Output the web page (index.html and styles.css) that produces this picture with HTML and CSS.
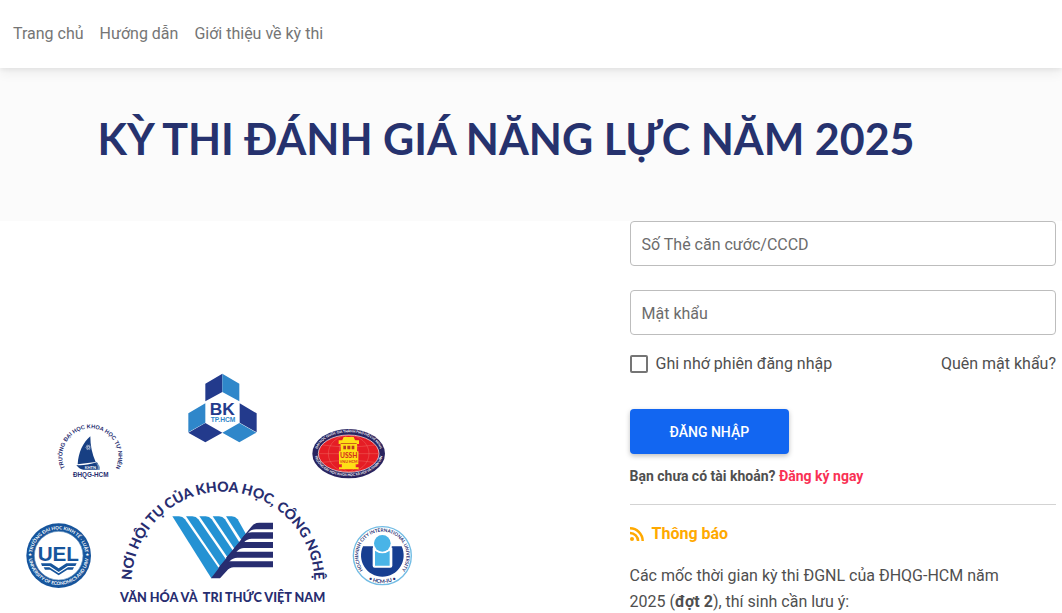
FILE: index.html
```html
<!DOCTYPE html>
<html lang="vi">
<head>
    <meta charset="UTF-8">
    <meta name="viewport" content="width=device-width, initial-scale=1.0">
    <title>Kỳ thi đánh giá năng lực</title>
    <link rel="stylesheet" href="styles.css">
</head>
<body>
    <nav class="navbar">
        <a href="#">Trang chủ</a>
        <a href="#">Hướng dẫn</a>
        <a href="#">Giới thiệu về kỳ thi</a>
    </nav>

    <header class="banner">
        <h1>KỲ THI ĐÁNH GIÁ NĂNG LỰC NĂM 2025</h1>
    </header>

    <main class="content">
        <div class="logos">
            <svg viewBox="0 0 1200 720" role="img" aria-label="Các trường thành viên">
                <defs>
                    <path id="arc-main" d="M65 354V324A274 274 0 0 1 613 324V354"/>
                    <path id="arc-khtn" d="M52 172A84 84 0 1 1 190 172"/>
                    <path id="arc-ussh-top" d="M54 97 A95 60 0 0 1 244 97"/>
                    <path id="arc-ussh-bottom" d="M47 100 A102 68 0 0 0 251 100"/>
                    <path id="arc-uel-top" d="M51 123 A80 80 0 0 1 211 123"/>
                    <path id="arc-uel-bottom" d="M41 120 A90 90 0 0 0 221 120"/>
                    <path id="arc-iu-top" d="M60 157A72 72 0 1 1 164 157"/>
                    <path id="arc-iu-bottom" d="M54 166A83 83 0 0 0 170 166"/>
                </defs>

                <!-- Bach Khoa -->
                <g transform="translate(450 -15)">
                    <path fill="#233a8c" d="M106 56 157 26V81L106 109ZM209 115 260 145V202L209 173ZM106 174 157 203 106 232 55 203Z"/>
                    <path fill="#2f87ca" d="M157 26 208 56V109L157 81ZM106 115 55 145V202L106 173ZM208 174 259 203 208 232 157 203Z"/>
                    <text class="logo-bk" x="157" y="149">BK</text>
                    <text class="logo-bk-sub" x="159" y="171">TP.HCM</text>
                </g>

                <!-- Khoa hoc tu nhien -->
                <g transform="translate(90 135)">
                    <text class="logo-khtn"><textPath href="#arc-khtn" startOffset="50%">TRƯỜNG ĐẠI HỌC KHOA HỌC TỰ NHIÊN</textPath></text>
                    <path fill="#173f83" d="M121 64C99 83 85 112 83 148L137 141C126 116 121 92 121 64ZM79 150Q100 154 141 142Q149 154 145 164H100Q89 164 79 150Z"/>
                    <path fill="#6d94bf" d="M137 144Q153 150 149 165H141Q147 155 137 144Z"/>
                    <g fill="none" stroke="#fff" stroke-width="1">
                        <ellipse cx="115" cy="97" rx="8" ry="3"/>
                        <ellipse cx="115" cy="97" rx="8" ry="3" transform="rotate(60 115 97)"/>
                        <ellipse cx="115" cy="97" rx="8" ry="3" transform="rotate(120 115 97)"/>
                    </g>
                    <text class="logo-khtn-sub" x="121" y="162">KHTN</text>
                    <text class="logo-khtn-name" x="122" y="187">ĐHQG-HCM</text>
                </g>

                <!-- Khoa hoc xa hoi va nhan van -->
                <g transform="translate(837 150)">
                    <ellipse cx="149" cy="101" rx="109" ry="74" fill="#29245f"/>
                    <ellipse cx="149" cy="101" rx="91" ry="56" fill="#e51d25" stroke="#fff" stroke-width="2"/>
                    <g fill="none" stroke="#f28b7d" stroke-width="1">
                        <ellipse cx="149" cy="101" rx="61" ry="55"/>
                        <ellipse cx="149" cy="101" rx="29" ry="55"/>
                        <path d="M59 101H239M71 75Q149 86 227 75M71 127Q149 116 227 127"/>
                    </g>
                    <path fill="#fedf16" d="M134 51H164L168 61H180V72H174V94H178V133H170V142H179V148H120V142H129V133H120V94H125V72H119V61H130Z"/>
                    <path fill="#bd3a1e" d="M133 77H141V88H133ZM145 77H154V88H145ZM158 77H166V88H158ZM125 69H173V71H125Z"/>
                    <text class="logo-ussh" x="149" y="113">USSH</text>
                    <text class="logo-ussh-sub" x="149" y="130">VNU HCM</text>
                    <text class="logo-ring-light"><textPath href="#arc-ussh-top" startOffset="50%">ĐẠI HỌC QUỐC GIA THÀNH PHỐ HỒ CHÍ MINH</textPath></text>
                    <text class="logo-ring-light"><textPath href="#arc-ussh-bottom" startOffset="50%">TRƯỜNG ĐẠI HỌC KHOA HỌC XÃ HỘI VÀ NHÂN VĂN</textPath></text>
                </g>

                <!-- Kinh te - Luat -->
                <g transform="translate(-15 435)">
                    <circle cx="131" cy="122" r="97" fill="#17559c"/>
                    <circle cx="131" cy="122" r="73" fill="#fff" stroke="#5c8dbd" stroke-width="2"/>
                    <text class="logo-ring-uel"><textPath href="#arc-uel-top" startOffset="50%">TRƯỜNG ĐẠI HỌC KINH TẾ - LUẬT</textPath></text>
                    <text class="logo-ring-uel"><textPath href="#arc-uel-bottom" startOffset="50%">UNIVERSITY OF ECONOMICS AND LAW</textPath></text>
                    <text class="logo-star" x="45" y="124">★</text>
                    <text class="logo-star" x="217" y="124">★</text>
                    <text class="logo-uel" x="130" y="138">UEL</text>
                    <path fill="#17559c" d="M78 145H108L131 160 154 145H185L181 153H158L131 171 104 153H81ZM86 157H103L131 175 159 157H177L173 164H157L131 181 105 164H90Z"/>
                </g>

                <!-- Dai hoc Quoc te -->
                <g transform="translate(975 450)">
                    <circle cx="112" cy="107" r="87" fill="#fff" stroke="#72bce4" stroke-width="4"/>
                    <text class="logo-ring-iu"><textPath href="#arc-iu-top" startOffset="50%">HOCHIMINH CITY INTERNATIONAL UNIVERSITY</textPath></text>
                    <text class="logo-ring-iu-bottom"><textPath href="#arc-iu-bottom" startOffset="50%">• HCM-IU •</textPath></text>
                    <path fill="#173e91" d="M54 79H84V92H140V79H170A64 64 0 1 1 54 79Z"/>
                    <path fill="#fff" d="M83 83H142V137Q142 143 136 143H89Q83 143 83 137Z"/>
                    <path fill="#49b4e7" d="M90 92Q112 108 134 92V137H90Z"/>
                    <circle cx="112" cy="70" r="29" fill="#fff"/>
                    <circle cx="112" cy="70" r="25" fill="#49b4e7"/>
                </g>

                <!-- DHQG-HCM -->
                <g transform="translate(270 315)">
                    <text class="logo-main"><textPath href="#arc-main" startOffset="50%">NƠI HỘI TỤ CỦA KHOA HỌC, CÔNG NGHỆ</textPath></text>
                    <g fill="#2492d3">
                        <path d="M187 124H207Q218 124 225 133L330 284 304 310Z"/>
                        <path d="M228 124H247Q258 124 265 133L351 257 333 278Z"/>
                        <path d="M268 124H287Q298 124 305 133L370 229 354 249Z"/>
                        <path d="M308 124H327Q338 124 345 133L389 203 374 222Z"/>
                        <path d="M348 124H365Q376 124 383 133L410 181 394 195Z"/>
                    </g>
                    <g fill="#272d70">
                        <path d="M489 143V163H438Q424 163 415 173L398 192H394L424 155Q433 143 448 143Z"/>
                        <path d="M489 172V191H425Q411 191 402 202L385 222H371L401 184Q411 172 426 172Z"/>
                        <path d="M489 201V219H402Q389 219 379 231L363 250H347L378 213Q388 201 403 201Z"/>
                        <path d="M489 230V248H382Q368 248 359 259L341 280H324L355 242Q365 230 380 230Z"/>
                        <path d="M489 259V277H371Q359 277 350 288L330 310H303L333 271Q343 259 358 259Z"/>
                    </g>
                    <text class="logo-motto" x="338" y="380">VĂN HÓA VÀ&#160; TRI THỨC VIỆT NAM</text>
                </g>
            </svg>
        </div>

        <section class="login">
            <form>
                <input class="text-input" type="text" id="cccd" name="cccd" placeholder="Số Thẻ căn cước/CCCD" aria-label="Số Thẻ căn cước/CCCD">
                <input class="text-input" type="password" id="mat-khau" name="mat-khau" placeholder="Mật khẩu" aria-label="Mật khẩu">
                <div class="options">
                    <label for="ghi-nho"><input class="checkbox" type="checkbox" id="ghi-nho" name="ghi-nho">Ghi nhớ phiên đăng nhập</label>
                    <a href="#">Quên mật khẩu?</a>
                </div>
                <button class="btn-login" type="submit">ĐĂNG NHẬP</button>
            </form>
            <p class="register">Bạn chưa có tài khoản? <a href="#">Đăng ký ngay</a></p>
            <hr>
            <h2 class="notice-title">
                <svg viewBox="0 0 14 14" aria-hidden="true">
                    <circle cx="2" cy="12" r="2"/>
                    <path d="M0 5.9A8.1 8.1 0 0 1 8.1 14M0 1.3A12.7 12.7 0 0 1 12.7 14"/>
                </svg>
                Thông báo
            </h2>
            <p class="notice">Các mốc thời gian kỳ thi ĐGNL của ĐHQG-HCM năm 2025 (<b>đợt 2</b>), thí sinh cần lưu ý:</p>
        </section>
    </main>
</body>
</html>
```
FILE: styles.css
```css
* {
    box-sizing: border-box;
}
body {
    margin: 0;
    font-family: Roboto, "Liberation Sans", sans-serif;
    font-size: 16px;
    line-height: 26px;
    color: #4f4f4f;
    background-color: #fff;
}
a {
    color: inherit;
    text-decoration: none;
}

.navbar {
    position: relative;
    display: flex;
    align-items: center;
    gap: 16px;
    height: 68px;
    padding: 0 13px;
    background-color: #fff;
    box-shadow: 0 4px 12px 0 rgba(0, 0, 0, 0.07), 0 2px 4px rgba(0, 0, 0, 0.05);
}
.navbar a {
    color: #757575;
}

.banner {
    padding: 41px 50px 52px 0;
    background-color: #fbfbfb;
}
.banner h1 {
    margin: 0;
    font-family: Lato, sans-serif;
    font-size: 43px;
    font-weight: 700;
    line-height: 60px;
    text-align: center;
    color: #26326e;
}

.content {
    display: grid;
    grid-template-columns: minmax(0, 7fr) minmax(0, 5fr);
}
.logos {
    padding: 149px 20px 0;
}
.logos svg {
    display: block;
    width: 100%;
    max-width: 400px;
}
.login {
    padding: 0 6px 0 10px;
}

.text-input {
    display: block;
    width: 100%;
    height: 45px;
    margin-bottom: 24px;
    padding: 2px 11px 0;
    border: 1px solid #bdbdbd;
    border-radius: 4px;
    font-family: inherit;
    font-size: 16px;
    background-color: #fff;
}
.text-input::placeholder {
    color: #6c6c6c;
}
.text-input + .text-input {
    margin-bottom: 16px;
}
.options {
    display: flex;
    justify-content: space-between;
    margin-bottom: 32px;
}
.options label {
    display: flex;
    align-items: center;
    gap: 8px;
}
.checkbox {
    appearance: none;
    width: 18px;
    height: 18px;
    margin: 0;
    border: 2px solid #757575;
    border-radius: 2px;
}
.checkbox:checked {
    background-color: #1266f1;
    border-color: #1266f1;
}
.btn-login {
    display: block;
    height: 45px;
    padding: 0 40px;
    border: 0;
    border-radius: 4px;
    font-family: inherit;
    font-size: 14px;
    font-weight: 500;
    color: #fff;
    background-color: #1266f1;
    box-shadow: 0 2px 5px rgba(0, 0, 0, 0.25);
}
.register {
    margin: 9px 0 15px;
    font-size: 14px;
    font-weight: 700;
}
.register a {
    color: #f93154;
}
hr {
    margin: 0 0 16px;
    border: 0;
    border-top: 1px solid #d3d3d3;
}
.notice-title {
    display: flex;
    align-items: center;
    gap: 8px;
    margin: 0 0 16px;
    font-size: 16px;
    line-height: 26px;
    color: #ffa900;
}
.notice-title svg {
    width: 14px;
    height: 14px;
    fill: #ffa900;
}
.notice-title path {
    fill: none;
    stroke: #ffa900;
    stroke-width: 2.5;
}
.notice {
    max-width: 400px;
    margin: 0;
}

/* logos */
.logos text {
    font-family: Lato, sans-serif;
    font-weight: 700;
    text-anchor: middle;
    fill: #272d70;
}
.logos .logo-main {
    font-size: 42px;
    font-weight: 900;
}
.logos .logo-motto {
    font-size: 38px;
    font-weight: 900;
}
.logos .logo-bk {
    font-family: "Liberation Sans", sans-serif;
    font-size: 52px;
    fill: #233a8c;
}
.logos .logo-bk-sub {
    font-family: "Liberation Sans", sans-serif;
    font-size: 20px;
    fill: #2f87ca;
}
.logos .logo-khtn {
    font-family: "Liberation Sans", sans-serif;
    font-size: 17px;
}
.logos .logo-khtn-sub {
    font-size: 12px;
    fill: #fff;
}
.logos .logo-khtn-name {
    font-family: "Liberation Sans", sans-serif;
    font-size: 19px;
}
.logos .logo-ussh {
    font-size: 20px;
    font-weight: 900;
    fill: #d6331f;
}
.logos .logo-ussh-sub {
    font-size: 11px;
    fill: #d6331f;
}
.logos .logo-ring-light {
    font-size: 10px;
    fill: #fff;
}
.logos .logo-ring-uel {
    font-size: 14px;
    fill: #fff;
}
.logos .logo-star {
    font-family: "DejaVu Sans", sans-serif;
    font-size: 14px;
    fill: #fff;
}
.logos .logo-uel {
    font-family: "Liberation Sans", sans-serif;
    font-size: 62px;
    fill: #17559c;
}
.logos .logo-ring-iu {
    font-size: 14px;
}
.logos .logo-ring-iu-bottom {
    font-size: 16px;
}
```
